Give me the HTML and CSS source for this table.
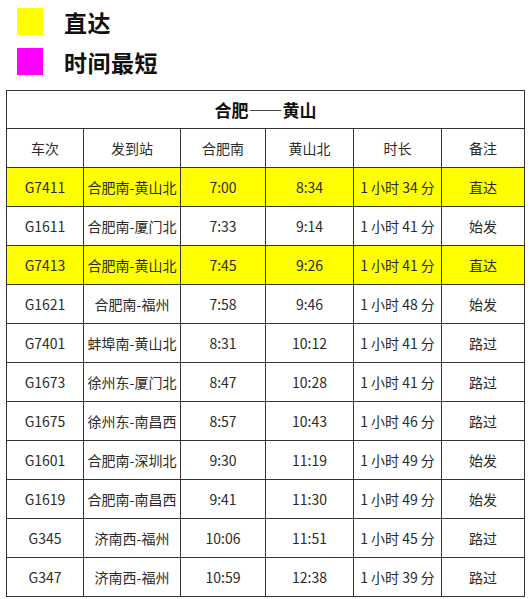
FILE: index.html
```html
<!DOCTYPE html>
<html lang="zh">
<head>
<meta charset="utf-8">
<link rel="stylesheet" href="styles.css">
</head>
<body>
<div class="legend">
  <div class="legend-item"><span class="swatch yellow"></span><span class="legend-text">直达</span></div>
  <div class="legend-item"><span class="swatch magenta"></span><span class="legend-text">时间最短</span></div>
</div>
<table class="schedule">
  <colgroup>
    <col class="c1"><col class="c2"><col class="c3"><col class="c4"><col class="c5"><col class="c6">
  </colgroup>
  <tr class="title"><td colspan="6">合肥——黄山</td></tr>
  <tr class="head"><td>车次</td><td>发到站</td><td>合肥南</td><td>黄山北</td><td>时长</td><td>备注</td></tr>
  <tr class="hl"><td>G7411</td><td>合肥南-黄山北</td><td>7:00</td><td>8:34</td><td>1 小时 34 分</td><td>直达</td></tr>
  <tr><td>G1611</td><td>合肥南-厦门北</td><td>7:33</td><td>9:14</td><td>1 小时 41 分</td><td>始发</td></tr>
  <tr class="hl"><td>G7413</td><td>合肥南-黄山北</td><td>7:45</td><td>9:26</td><td>1 小时 41 分</td><td>直达</td></tr>
  <tr><td>G1621</td><td>合肥南-福州</td><td>7:58</td><td>9:46</td><td>1 小时 48 分</td><td>始发</td></tr>
  <tr><td>G7401</td><td>蚌埠南-黄山北</td><td>8:31</td><td>10:12</td><td>1 小时 41 分</td><td>路过</td></tr>
  <tr><td>G1673</td><td>徐州东-厦门北</td><td>8:47</td><td>10:28</td><td>1 小时 41 分</td><td>路过</td></tr>
  <tr><td>G1675</td><td>徐州东-南昌西</td><td>8:57</td><td>10:43</td><td>1 小时 46 分</td><td>路过</td></tr>
  <tr><td>G1601</td><td>合肥南-深圳北</td><td>9:30</td><td>11:19</td><td>1 小时 49 分</td><td>始发</td></tr>
  <tr><td>G1619</td><td>合肥南-南昌西</td><td>9:41</td><td>11:30</td><td>1 小时 49 分</td><td>始发</td></tr>
  <tr><td>G345</td><td>济南西-福州</td><td>10:06</td><td>11:51</td><td>1 小时 45 分</td><td>路过</td></tr>
  <tr><td>G347</td><td>济南西-福州</td><td>10:59</td><td>12:38</td><td>1 小时 39 分</td><td>路过</td></tr>
</table>
</body>
</html>
```
FILE: styles.css
```css
html, body {
  margin: 0;
  padding: 0;
  background: #ffffff;
}
body {
  font-family: "Noto Sans CJK SC", "Liberation Sans", sans-serif;
  color: #2b2b2b;
}
.legend {
  padding: 8px 0 0 17px;
  display: flex;
  flex-direction: column;
  gap: 13px;
}
.legend-item {
  display: flex;
  align-items: center;
  height: 27px;
}
.swatch {
  width: 26px;
  height: 27px;
  display: block;
}
.yellow { background: #ffff00; }
.magenta { background: #ff00ff; }
.legend-text {
  margin-left: 21px;
  font-size: 23px;
  font-weight: bold;
  color: #111;
  letter-spacing: 0.5px;
}
.schedule {
  margin: 15px 0 0 6px;
  border-collapse: collapse;
  table-layout: fixed;
  width: 518px;
}
.c1 { width: 77px; }
.c2 { width: 97px; }
.c3 { width: 85px; }
.c4 { width: 88px; }
.c5 { width: 88px; }
.c6 { width: 83px; }
.schedule td {
  border: 1px solid #333;
  text-align: center;
  font-size: 14px;
  height: 38px;
  padding: 0;
  white-space: nowrap;
}
.schedule tr.title td {
  font-size: 17px;
  font-weight: bold;
  color: #111;
  height: 37px;
}
.schedule tr.head td {
  height: 38px;
}
.schedule tr.hl td {
  background: #ffff00;
}
```
